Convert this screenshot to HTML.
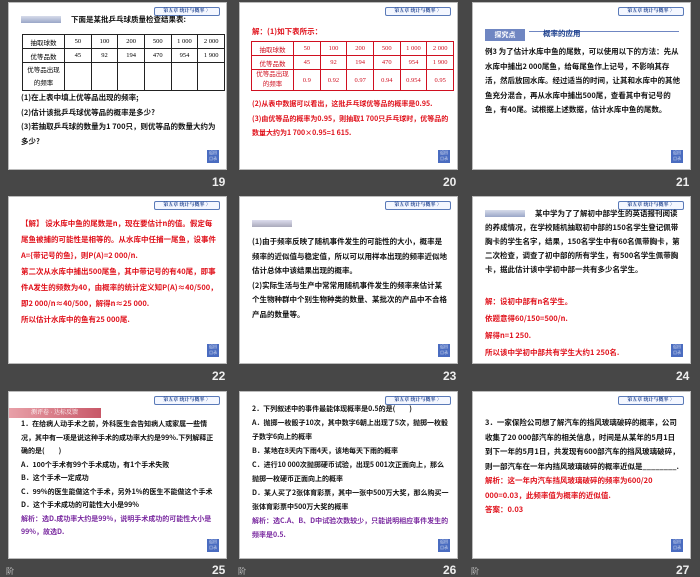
<!DOCTYPE html>
<html><head><meta charset="utf-8"><style>
*{margin:0;padding:0;box-sizing:border-box}
body{width:700px;height:576px;background:#474747;position:relative;overflow:hidden;font-family:"Liberation Serif","Noto Serif CJK SC","Noto Sans CJK SC",serif}
.s{position:absolute;width:219px;height:168px;background:#fff;border:1px solid #bbb;overflow:hidden}
.n{position:absolute;color:#eee;font:bold 12px "Liberation Sans",sans-serif}
.h{position:absolute;right:6px;top:4px;width:66px;height:9px;border:1px solid #5a7ab8;border-radius:2px;font-size:5px;line-height:7px;color:#1c3f8c;text-align:center;font-weight:bold;background:#f4f7ff}
.ic{position:absolute;right:7px;bottom:6px;width:12px;height:13px;background:#4a6cc0;color:#fff;font-size:4px;line-height:6px;text-align:center}
.t{position:absolute;left:12px;right:8px;font-size:7.5px;line-height:14.5px;font-weight:bold;color:#111;font-family:"Noto Sans CJK SC",sans-serif}
.r{color:#e0101a}.p{color:#7a2aa0}
.tag{display:inline-block;width:40px;height:7px;background:linear-gradient(#d7dcea,#9aa6c8);vertical-align:middle;margin-right:10px}
table{border-collapse:collapse;position:absolute;left:13px;width:203px;table-layout:fixed;font-size:6.5px;font-family:"Liberation Serif","Noto Sans CJK SC",serif;text-align:center}
td{border:1px solid #222;height:14px;padding:0;overflow:hidden;white-space:nowrap}
.red td{border-color:#d01020;color:#d01020}
.ft{position:absolute;color:#ddd;font-size:8px}
</style></head><body>

<!-- 19 -->
<div class="s" style="left:8px;top:2px">
<div class="h">第五章 统计与概率 〉</div>
<div class="t" style="top:10px"><span class="tag"></span>下面是某批乒乓球质量检查结果表:</div>
<table style="top:31px"><col style="width:42px"><col><col><col><col><col><col>
<tr><td>抽取球数</td><td>50</td><td>100</td><td>200</td><td>500</td><td>1 000</td><td>2 000</td></tr>
<tr><td>优等品数</td><td>45</td><td>92</td><td>194</td><td>470</td><td>954</td><td>1 900</td></tr>
<tr><td style="height:28px;line-height:13px;white-space:normal">优等品出现<br>的频率</td><td></td><td></td><td></td><td></td><td></td><td></td></tr></table>
<div class="t" style="top:88px">(1)在上表中填上优等品出现的频率;<br>(2)估计该批乒乓球优等品的概率是多少?<br>(3)若抽取乒乓球的数量为1 700只，则优等品的数量大约为多少?</div>
<div class="ic">返回<br>目录</div></div>
<div class="n" style="left:212px;top:175px">19</div>

<!-- 20 -->
<div class="s" style="left:239px;top:2px">
<div class="h">第五章 统计与概率 〉</div>
<div class="t r" style="top:22px">解：(1)如下表所示：</div>
<table class="red" style="top:38px;left:11px"><col style="width:42px"><col><col><col><col><col><col>
<tr><td style="height:14px">抽取球数</td><td>50</td><td>100</td><td>200</td><td>500</td><td>1 000</td><td>2 000</td></tr>
<tr><td>优等品数</td><td>45</td><td>92</td><td>194</td><td>470</td><td>954</td><td>1 900</td></tr>
<tr><td style="height:21px;line-height:10px;white-space:normal">优等品出现<br>的频率</td><td>0.9</td><td>0.92</td><td>0.97</td><td>0.94</td><td>0.954</td><td>0.95</td></tr></table>
<div class="t r" style="top:94px;font-size:7px">(2)从表中数据可以看出，这批乒乓球优等品的概率是0.95.<br>(3)由优等品的概率为0.95，则抽取1 700只乒乓球时，优等品的数量大约为1 700×0.95=1 615.</div>
<div class="ic">返回<br>目录</div></div>
<div class="n" style="left:443px;top:175px">20</div>

<!-- 21 -->
<div class="s" style="left:472px;top:2px">
<div class="h">第五章 统计与概率 〉</div>
<div style="position:absolute;left:12px;top:26px;width:40px;height:12px;background:#6f86c2;color:#fff;font:bold 7px 'Noto Sans CJK SC',sans-serif;line-height:12px;text-align:center">探究点</div>
<div style="position:absolute;left:56px;top:28px;width:150px;height:1px;background:#6f86c2"></div>
<div class="t" style="top:24px;left:70px;color:#1c3f8c">概率的应用</div>
<div class="t" style="top:42px">例3 为了估计水库中鱼的尾数，可以使用以下的方法：先从水库中捕出2 000尾鱼，给每尾鱼作上记号，不影响其存活，然后放回水库。经过适当的时间，让其和水库中的其他鱼充分混合，再从水库中捕出500尾，查看其中有记号的鱼，有40尾。试根据上述数据，估计水库中鱼的尾数。</div>
<div class="ic">返回<br>目录</div></div>
<div class="n" style="left:676px;top:175px">21</div>

<!-- 22 -->
<div class="s" style="left:8px;top:196px">
<div class="h">第五章 统计与概率 〉</div>
<div class="t r" style="top:19px;line-height:16px">【解】 设水库中鱼的尾数是n，现在要估计n的值。假定每尾鱼被捕的可能性是相等的。从水库中任捕一尾鱼，设事件A={带记号的鱼}，则P(A)=2 000/n.<br>第二次从水库中捕出500尾鱼，其中带记号的有40尾，即事件A发生的频数为40，由概率的统计定义知P(A)≈40/500，即2 000/n≈40/500，解得n≈25 000.<br>所以估计水库中的鱼有25 000尾.</div>
<div class="ic">返回<br>目录</div></div>
<div class="n" style="left:212px;top:369px">22</div>

<!-- 23 -->
<div class="s" style="left:239px;top:196px">
<div class="h">第五章 统计与概率 〉</div>
<div class="t" style="top:20px"><span class="tag" style="background:linear-gradient(#dde,#aab)"></span></div>
<div class="t" style="top:38px">(1)由于频率反映了随机事件发生的可能性的大小，概率是频率的近似值与稳定值，所以可以用样本出现的频率近似地估计总体中该结果出现的概率。<br>(2)实际生活与生产中常常用随机事件发生的频率来估计某个生物种群中个别生物种类的数量、某批次的产品中不合格产品的数量等。</div>
<div class="ic">返回<br>目录</div></div>
<div class="n" style="left:443px;top:369px">23</div>

<!-- 24 -->
<div class="s" style="left:472px;top:196px">
<div class="h">第五章 统计与概率 〉</div>
<div class="t" style="top:10px;line-height:14px"><span class="tag"></span>某中学为了了解初中部学生的英语报刊阅读的养成情况，在学校随机抽取初中部的150名学生登记佩带胸卡的学生名字，结果，150名学生中有60名佩带胸卡，第二次检查，调查了初中部的所有学生，有500名学生佩带胸卡，据此估计该中学初中部一共有多少名学生。</div>
<div class="t r" style="top:96px;line-height:17px">解：设初中部有n名学生。<br>依题意得60/150=500/n.<br>解得n=1 250.<br>所以该中学初中部共有学生大约1 250名.</div>
<div class="ic">返回<br>目录</div></div>
<div class="n" style="left:676px;top:369px">24</div>

<!-- 25 -->
<div class="s" style="left:8px;top:391px">
<div class="h">第五章 统计与概率 〉</div>
<div style="position:absolute;left:0;top:16px;width:92px;height:10px;background:linear-gradient(90deg,#e8a0a8,#c85868);color:#fff;font-size:6px;line-height:10px;padding-left:22px">测评卷 · 达标反馈</div>
<div class="t" style="top:26px;font-size:7px;line-height:13.5px">1．在给病人动手术之前，外科医生会告知病人或家属一些情况，其中有一项是说这种手术的成功率大约是99%.下列解释正确的是(　　)<br>A．100个手术有99个手术成功，有1个手术失败<br>B．这个手术一定成功<br>C．99%的医生能做这个手术，另外1%的医生不能做这个手术<br>D．这个手术成功的可能性大小是99%<br><span class="p">解析：选D.成功率大约是99%，说明手术成功的可能性大小是99%，故选D.</span></div>
<div class="ic">返回<br>目录</div></div>
<div class="ft" style="left:6px;top:566px">阶</div>
<div class="n" style="left:212px;top:563px">25</div>

<!-- 26 -->
<div class="s" style="left:239px;top:391px">
<div class="h">第五章 统计与概率 〉</div>
<div class="t" style="top:10px;line-height:14px;font-size:7px">2．下列叙述中的事件最能体现概率是0.5的是(　　)<br>A．抛掷一枚骰子10次，其中数字6朝上出现了5次，抛掷一枚骰子数字6向上的概率<br>B．某地在8天内下雨4天，该地每天下雨的概率<br>C．进行10 000次抛掷硬币试验，出现5 001次正面向上，那么抛掷一枚硬币正面向上的概率<br>D．某人买了2张体育彩票，其中一张中500万大奖，那么购买一张体育彩票中500万大奖的概率<br><span class="p">解析：选C.A、B、D中试验次数较少，只能说明相应事件发生的频率是0.5.</span></div>
<div class="ic">返回<br>目录</div></div>
<div class="ft" style="left:238px;top:566px">阶</div>
<div class="n" style="left:443px;top:563px">26</div>

<!-- 27 -->
<div class="s" style="left:472px;top:391px">
<div class="h">第五章 统计与概率 〉</div>
<div class="t" style="top:24px">3．一家保险公司想了解汽车的挡风玻璃破碎的概率，公司收集了20 000部汽车的相关信息，时间是从某年的5月1日到下一年的5月1日，共发现有600部汽车的挡风玻璃破碎，则一部汽车在一年内挡风玻璃破碎的概率近似是________.<br><span class="r">解析：这一年内汽车挡风玻璃破碎的频率为600/20 000=0.03，此频率值为概率的近似值.<br>答案：0.03</span></div>
<div class="ic">返回<br>目录</div></div>
<div class="ft" style="left:471px;top:566px">阶</div>
<div class="n" style="left:676px;top:563px">27</div>

</body></html>
